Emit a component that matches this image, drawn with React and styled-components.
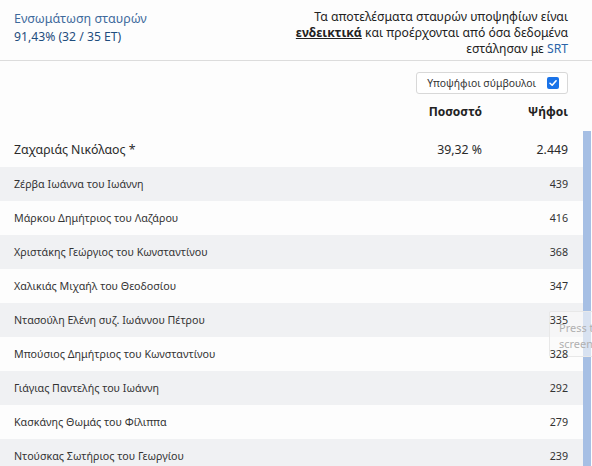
import React from 'react'
import styled, { createGlobalStyle } from 'styled-components'

const GlobalStyle = createGlobalStyle`
  html, body {
    margin: 0;
    padding: 0;
    background: #fdfdfd;
  }
  body {
    font-family: "Noto Sans", "Open Sans", sans-serif;
    color: #333;
  }
`

const candidates = [
  { name: 'Ζέρβα Ιωάννα του Ιωάννη', votes: '439' },
  { name: 'Μάρκου Δημήτριος του Λαζάρου', votes: '416' },
  { name: 'Χριστάκης Γεώργιος του Κωνσταντίνου', votes: '368' },
  { name: 'Χαλικιάς Μιχαήλ του Θεοδοσίου', votes: '347' },
  { name: 'Ντασούλη Ελένη συζ. Ιωάννου Πέτρου', votes: '335' },
  { name: 'Μπούσιος Δημήτριος του Κωνσταντίνου', votes: '328' },
  { name: 'Γιάγιας Παντελής του Ιωάννη', votes: '292' },
  { name: 'Κασκάνης Θωμάς του Φίλιππα', votes: '279' },
  { name: 'Ντούσκας Σωτήριος του Γεωργίου', votes: '239' },
]

function App() {
  return (
    <Page>
      <GlobalStyle />
      <Header>
        <Summary>
          <SummaryLabel>Ενσωμάτωση σταυρών</SummaryLabel>
          <SummaryValue>91,43% (32 / 35 ΕΤ)</SummaryValue>
        </Summary>
        <Notice>
          Τα αποτελέσματα σταυρών υποψηφίων είναι <Strong>ενδεικτικά</Strong> και
          προέρχονται από όσα δεδομένα εστάλησαν με <Link>SRT</Link>
        </Notice>
      </Header>

      <Toolbar>
        <Toggle>
          Υποψήφιοι σύμβουλοι
          <Check>
            <svg width="10" height="10" viewBox="0 0 12 12">
              <path d="M2.4 6.3 L5 8.7 L9.7 3.3" fill="none" stroke="#fff" strokeWidth="1.9" strokeLinecap="round" strokeLinejoin="round" />
            </svg>
          </Check>
        </Toggle>
      </Toolbar>

      <ColumnHead>
        <span />
        <HeadCell>Ποσοστό</HeadCell>
        <HeadCell>Ψήφοι</HeadCell>
      </ColumnHead>

      <Body>
        <Table>
          <LeadRow>
            <span>Ζαχαριάς Νικόλαος *</span>
            <Num>39,32 %</Num>
            <Num>2.449</Num>
          </LeadRow>
          {candidates.map((c, i) => (
            <Row key={c.name} $striped={i % 2 === 0}>
              <span>{c.name}</span>
              <Num />
              <Num>{c.votes}</Num>
            </Row>
          ))}
        </Table>
        <ScrollThumb />
      </Body>

      <Tip>
        Press t<br />screen
      </Tip>
    </Page>
  )
}

const Page = styled.div`
  position: relative;
  width: 592px;
  height: 466px;
  overflow: hidden;
  background: #fdfdfd;
`

const Header = styled.header`
  display: flex;
  justify-content: space-between;
  align-items: flex-start;
  height: 61px;
  box-sizing: border-box;
  padding: 9px 24px 0 14px;
  border-bottom: 1px solid #dcdcdc;
`

const Summary = styled.div`
  display: flex;
  flex-direction: column;
  padding-top: 1px;
`

const SummaryLabel = styled.span`
  font-size: 12.5px;
  line-height: 18px;
  color: #3d6a9c;
`

const SummaryValue = styled.span`
  font-size: 12.2px;
  line-height: 18px;
  color: #1f4d7d;
`

const Notice = styled.p`
  margin: 0;
  width: 280px;
  text-align: right;
  font-size: 12.2px;
  line-height: 16px;
  color: #222;
`

const Strong = styled.b`
  font-weight: 700;
  text-decoration: underline;
`

const Link = styled.span`
  color: #2a63a8;
`

const Toolbar = styled.div`
  display: flex;
  justify-content: flex-end;
  padding: 11px 24px 0 0;
`

const Toggle = styled.label`
  display: flex;
  align-items: center;
  gap: 11px;
  height: 22px;
  box-sizing: border-box;
  padding: 0 8px 0 10px;
  border: 1px solid #d8d8d8;
  border-radius: 3px;
  background: #fff;
  font-size: 10.4px;
  color: #333;
`

const Check = styled.span`
  display: flex;
  align-items: center;
  justify-content: center;
  width: 12px;
  height: 12px;
  border-radius: 2px;
  background: #1a73e8;
`

const grid = `
  display: grid;
  grid-template-columns: 1fr 100px 86px;
  align-items: center;
  padding: 0 15px 0 14px;
`

const ColumnHead = styled.div`
  ${grid}
  padding-right: 24px;
  height: 35px;
  font-size: 12px;
  font-weight: 700;
  color: #222;
`

const HeadCell = styled.span`
  text-align: right;
`

const Body = styled.div`
  display: flex;
  align-items: stretch;
  margin-top: 2px;
`

const Table = styled.div`
  flex: 1;
  display: flex;
  flex-direction: column;
`

const LeadRow = styled.div`
  ${grid}
  height: 36px;
  font-size: 12.3px;
  color: #2a2a2a;
`

const Row = styled.div`
  ${grid}
  height: 34px;
  font-size: 10.7px;
  color: #333;
  background: ${p => (p.$striped ? '#f0f1f3' : '#fdfdfd')};
`

const Num = styled.span`
  position: relative;
  z-index: 2;
  text-align: right;
`

const ScrollThumb = styled.div`
  width: 8px;
  margin-right: 1px;
  background: #a6bfe4;
`

const Tip = styled.div`
  position: absolute;
  z-index: 1;
  left: 549px;
  top: 311px;
  width: 50px;
  height: 46px;
  box-sizing: border-box;
  padding: 8px 0 0 9px;
  background: rgba(250, 250, 250, 0.6);
  border: 1px solid #e8e8e8;
  border-radius: 2px;
  font-size: 11px;
  line-height: 16px;
  color: #b0b0b0;
  white-space: nowrap;
  overflow: hidden;
`

export default App
